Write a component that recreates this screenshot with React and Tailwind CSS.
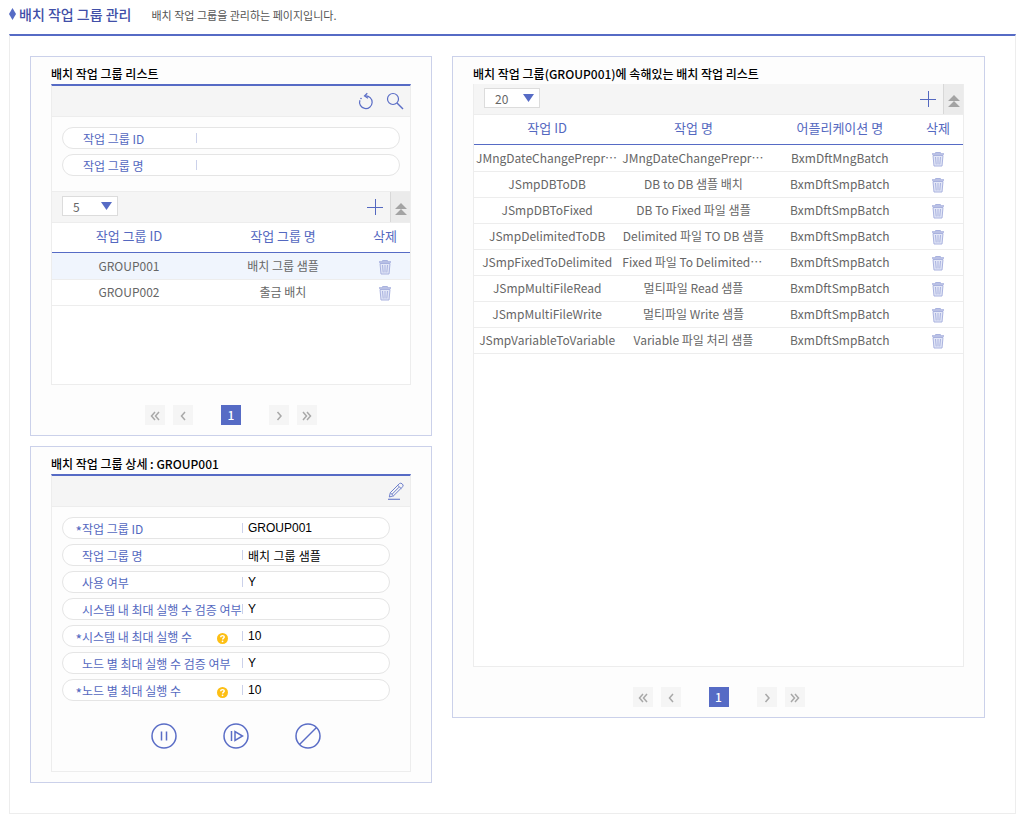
import { useState } from "react";

const JOBS = [
  ["JMngDateChangePreprocess", "JMngDateChangePreprocess", "BxmDftMngBatch"],
  ["JSmpDBToDB", "DB to DB 샘플 배치", "BxmDftSmpBatch"],
  ["JSmpDBToFixed", "DB To Fixed 파일 샘플", "BxmDftSmpBatch"],
  ["JSmpDelimitedToDB", "Delimited 파일 TO DB 샘플", "BxmDftSmpBatch"],
  ["JSmpFixedToDelimited", "Fixed 파일 To Delimited 샘플", "BxmDftSmpBatch"],
  ["JSmpMultiFileRead", "멀티파일 Read 샘플", "BxmDftSmpBatch"],
  ["JSmpMultiFileWrite", "멀티파일 Write 샘플", "BxmDftSmpBatch"],
  ["JSmpVariableToVariable", "Variable 파일 처리 샘플", "BxmDftSmpBatch"],
];

const GROUPS = [
  ["GROUP001", "배치 그룹 샘플"],
  ["GROUP002", "출금 배치"],
];

const DETAILS = [
  { id: "d-id", label: "작업 그룹 ID", value: "GROUP001", required: true },
  { id: "d-name", label: "작업 그룹 명", value: "배치 그룹 샘플" },
  { id: "d-use", label: "사용 여부", value: "Y" },
  { id: "d-sys-check", label: "시스템 내 최대 실행 수 검증 여부", value: "Y" },
  { id: "d-sys-max", label: "시스템 내 최대 실행 수", value: "10", required: true, help: true },
  { id: "d-node-check", label: "노드 별 최대 실행 수 검증 여부", value: "Y" },
  { id: "d-node-max", label: "노드 별 최대 실행 수", value: "10", required: true, help: true },
];

function TrashIcon() {
  return (
    <svg width="14" height="16" viewBox="0 0 14 16" fill="none" stroke="#a9b2df" aria-hidden="true">
      <path d="M4.5 2.5v-1h5v1" />
      <path d="M1 3h12" strokeWidth="1.6" />
      <path d="M2 4.5h10l-1 10.5H3z" fill="#e3e7f7" />
      <path d="M4.5 6l.7 7.5M7 6v7.5M9.5 6l-.7 7.5" />
    </svg>
  );
}

function ResetIcon() {
  return (
    <svg width="16" height="18" viewBox="0 0 16 18" fill="none" stroke="#5a6dc6" strokeWidth="1.2" aria-hidden="true">
      <path d="M7.2 4a6.3 6.3 0 1 1-5.3 4.2" />
      <path d="M9.3 1.3 6.5 4l3.5 2.3" />
      <circle cx="3" cy="6.5" r=".8" fill="#5a6dc6" stroke="none" />
    </svg>
  );
}

function SearchIcon() {
  return (
    <svg width="18" height="18" viewBox="0 0 18 18" fill="none" stroke="#5a6dc6" strokeWidth="1.2" aria-hidden="true">
      <circle cx="7" cy="7" r="5.5" />
      <path d="M11 11 17 17" strokeWidth="1.4" />
    </svg>
  );
}

function PlusIcon() {
  return (
    <svg width="16" height="16" viewBox="0 0 16 16" stroke="#5468c0" aria-hidden="true">
      <path d="M8.5 0v16M0 8.5h16" />
    </svg>
  );
}

function CollapseIcon() {
  return (
    <svg width="12" height="12" viewBox="0 0 12 12" fill="#a3a3a3" aria-hidden="true">
      <path d="M6 0l6 6H0zM6 6l6 6H0z" />
    </svg>
  );
}

function PencilIcon() {
  return (
    <svg width="18" height="18" viewBox="0 0 18 18" fill="none" stroke="#6f80cc" aria-hidden="true">
      <path d="M12.5 1.5q1.3-.8 2.6.3t1 2.5L6.5 13.8l-4.2 1.2 1-4.3z" />
      <path d="M10.8 3.5l3.6 3.2M3.3 10.7l3.2 3.1M12 5.2 5 12.3" />
      <path d="M1 17.3h12" strokeWidth="1.2" />
    </svg>
  );
}

function HelpIcon() {
  return (
    <svg width="11" height="11" viewBox="0 0 10 10" aria-hidden="true">
      <circle cx="5" cy="5" r="5" fill="#fdbf14" />
      <path d="M3.4 3.9q0-1.5 1.6-1.5t1.6 1.3c0 .9-1.5 1-1.5 2.2" fill="none" stroke="#fff" strokeWidth="1.3" />
      <circle cx="5.05" cy="7.6" r=".8" fill="#fff" />
    </svg>
  );
}

const ACTIONS = [
  ["일시정지", "M10.5 8.5v9M15.5 8.5v9"],
  ["재개", "M8.5 8v10M12 8.5v9l7.5-4.5z"],
  ["중지", "M4.5 21.5l17-17"],
];

function Pager() {
  const side = "grid size-5 place-items-center bg-[#f5f5f5]";
  const glyph = { width: 10, height: 10, viewBox: "0 0 10 10", fill: "none", stroke: "#a8a8a8", strokeWidth: 1.5, className: "mt-px" };
  return (
    <nav aria-label="페이지" className="flex justify-center pt-5 pb-[10px]">
      <button type="button" aria-label="처음" className={side}>
        <svg {...glyph}><path d="M5 1 1.5 5 5 9M9 1 5.5 5 9 9" /></svg>
      </button>
      <button type="button" aria-label="이전" className={"ml-2 " + side}>
        <svg {...glyph}><path d="M7 1 3.5 5 7 9" /></svg>
      </button>
      <button type="button" aria-current="page" className="mx-7 size-5 bg-[#566bc5] text-[12px] leading-5 font-medium text-white">1</button>
      <button type="button" aria-label="다음" className={side}>
        <svg {...glyph}><path d="M3.5 1 7 5 3.5 9" /></svg>
      </button>
      <button type="button" aria-label="마지막" className={"ml-2 " + side}>
        <svg {...glyph}><path d="M1 1l3.5 4L1 9M5 1l3.5 4L5 9" /></svg>
      </button>
    </nav>
  );
}

function ListToolbar({ label, size }) {
  return (
    <div className="flex h-[31px] items-stretch border-b border-[#ededed] bg-[#f5f5f5] pl-[10px]">
      <div className="relative mt-1 h-5 w-14">
        <select aria-label={label} defaultValue={size} className="block h-5 w-full appearance-none border border-[#dcdcdc] bg-white pt-[2px] pl-[10px] text-[12px] leading-4 text-[#666]">
          <option>5</option>
          <option>10</option>
          <option>20</option>
        </select>
        <svg className="pointer-events-none absolute top-[6px] right-[6px]" width="11" height="8" viewBox="0 0 11 8" fill="#566bc5" aria-hidden="true">
          <path d="M0 0h11L5.5 8z" />
        </svg>
      </div>
      <button type="button" aria-label="추가" className="mr-[7px] ml-auto">
        <PlusIcon />
      </button>
      <button type="button" aria-label="접기" className="grid w-5 place-items-center border-l border-[#d8d8d8] bg-[#ebebeb] pt-1">
        <CollapseIcon />
      </button>
    </div>
  );
}

function Grid({ columns, rows, selected, onSelect, className }) {
  return (
    <div className={"bg-white " + className}>
      <table className="w-full table-fixed border-separate border-spacing-0 text-center text-[12px] leading-[18px] text-[#666]">
        <thead>
          <tr className="text-[13px] text-[#5468c0]">
            {columns.map((c) => (
              <th key={c} className="h-[30px] border-b border-[#566bc5] p-0 pb-1 font-normal">{c}</th>
            ))}
            <th className="h-[30px] w-[50px] border-b border-[#566bc5] p-0 pb-1 font-normal">삭제</th>
          </tr>
        </thead>
        <tbody>
          {rows.map((r, i) => (
            <tr key={r[0]} onClick={() => onSelect && onSelect(i)} className={"h-[26px] first:h-[27px] " + (i === selected ? "bg-[#f0f5fd]" : "bg-white")}>
              {r.map((v, j) => (
                <td key={j} className="truncate border-b border-[#ededed] px-[2px] pt-0 pb-px">{v}</td>
              ))}
              <td className="border-b border-[#ededed] p-0">
                <button type="button" aria-label={r[0] + " 삭제"} className="flex w-full justify-center pt-px">
                  <TrashIcon />
                </button>
              </td>
            </tr>
          ))}
        </tbody>
      </table>
    </div>
  );
}

function Panel({ title, children }) {
  return (
    <section className="border border-[#cbd1ea] bg-[#fdfdfd] px-5">
      <h2 className="h-[27px] pt-2 text-[12px] leading-[18px] font-medium text-black">{title}</h2>
      {children}
    </section>
  );
}

function SearchField({ id, label }) {
  return (
    <div className="flex h-[22px] items-center rounded-full border border-[#e5e5e5] bg-white">
      <div className="flex h-[10px] w-[134px] shrink-0 items-center border-r border-[#cbd1ea] pl-5">
        <label htmlFor={id} className="pt-px text-[12px] leading-[10px] text-[#5468c0]">{label}</label>
      </div>
      <input id={id} type="text" className="h-full min-w-0 flex-1 bg-transparent px-[6px] text-[12px] outline-none" />
    </div>
  );
}

function DetailField({ id, label, value, required, help }) {
  return (
    <div className="flex h-[22px] items-center rounded-full border border-[#e5e5e5] bg-white">
      <div className="flex h-[10px] w-[180px] shrink-0 items-center border-r border-[#cbd1ea]">
        <span className="w-[19px] shrink-0 pt-[5px] text-right text-[14px] leading-[10px] text-[#5468c0]">{required && "*"}</span>
        <label htmlFor={id} className="flex-1 pt-px text-[12px] leading-[10px] whitespace-nowrap text-[#5468c0]">{label}</label>
        {help && (
          <button type="button" aria-label={label + " 도움말"} className="mr-[14px] shrink-0 pt-1"><HelpIcon /></button>
        )}
      </div>
      <input id={id} type="text" readOnly value={value} className="h-full min-w-0 flex-1 bg-transparent px-[5px] font-['Liberation_Sans','Noto_Sans_CJK_KR',sans-serif] text-[12px] text-black outline-none" />
    </div>
  );
}

export default function App() {
  const [selected, setSelected] = useState(0);
  return (
    <div className="bg-white pr-2 pb-[6px] pl-[9px] font-['Noto_Sans_CJK_KR','Noto_Sans',sans-serif]">
      <header className="flex h-[34px] items-center pb-[6px]">
        <svg width="7" height="12" viewBox="0 0 7 12" fill="#566bc5" aria-hidden="true"><path d="M3.5 0 7 6l-3.5 6L0 6z" /></svg>
        <h1 className="ml-[3px] text-[14px] leading-5 font-medium text-[#414fa8]">배치 작업 그룹 관리</h1>
        <p className="ml-5 pt-[2px] text-[11px] leading-5 text-[#555]">배치 작업 그룹을 관리하는 페이지입니다.</p>
      </header>
      <main className="grid grid-cols-[402fr_533fr] items-start gap-5 border border-t-2 border-[#ededed] border-t-[#566bc5] pt-5 pr-[30px] pb-[30px] pl-5">
        <div className="flex min-w-0 flex-col gap-[10px]">
          <Panel title="배치 작업 그룹 리스트">
            <div className="border border-t-2 border-[#ededed] border-t-[#566bc5]">
              <div className="flex h-[31px] items-center justify-end gap-3 border-b border-[#ededed] bg-[#f5f5f5] pr-[6px]">
                <button type="button" aria-label="초기화"><ResetIcon /></button>
                <button type="button" aria-label="검색"><SearchIcon /></button>
              </div>
              <form className="flex flex-col gap-[5px] px-[10px] pt-[10px] pb-[15px]">
                <SearchField id="q-id" label="작업 그룹 ID" />
                <SearchField id="q-name" label="작업 그룹 명" />
              </form>
              <div className="border-t border-[#ededed]">
                <ListToolbar label="그룹 표시 개수" size="5" />
                <Grid columns={["작업 그룹 ID", "작업 그룹 명"]} rows={GROUPS} selected={selected} onSelect={setSelected} className="min-h-[161px]" />
              </div>
            </div>
            <Pager />
          </Panel>
          <Panel title="배치 작업 그룹 상세 : GROUP001">
            <div className="mb-[10px] border border-t-2 border-[#ededed] border-t-[#566bc5]">
              <div className="flex h-[31px] items-center justify-end border-b border-[#ededed] bg-[#f5f5f5] pr-[5px]">
                <button type="button" aria-label="수정"><PencilIcon /></button>
              </div>
              <div className="flex flex-col gap-[5px] pt-[10px] pr-5 pl-[10px]">
                {DETAILS.map((d) => <DetailField key={d.id} {...d} />)}
              </div>
              <div className="flex justify-center gap-[46px] py-[22px] pl-[10px]">
                {ACTIONS.map(([name, d]) => (
                  <button key={name} type="button" aria-label={name}>
                    <svg width="26" height="26" viewBox="0 0 26 26" fill="none" stroke="#5a6dc6" strokeWidth="1.5" aria-hidden="true">
                      <circle cx="13" cy="13" r="12" />
                      <path d={d} />
                    </svg>
                  </button>
                ))}
              </div>
            </div>
          </Panel>
        </div>
        <Panel title="배치 작업 그룹(GROUP001)에 속해있는 배치 작업 리스트">
          <div className="border border-t-0 border-[#ededed]">
            <ListToolbar label="작업 표시 개수" size="20" />
            <Grid columns={["작업 ID", "작업 명", "어플리케이션 명"]} rows={JOBS} className="min-h-[551px]" />
          </div>
          <Pager />
        </Panel>
      </main>
    </div>
  );
}
